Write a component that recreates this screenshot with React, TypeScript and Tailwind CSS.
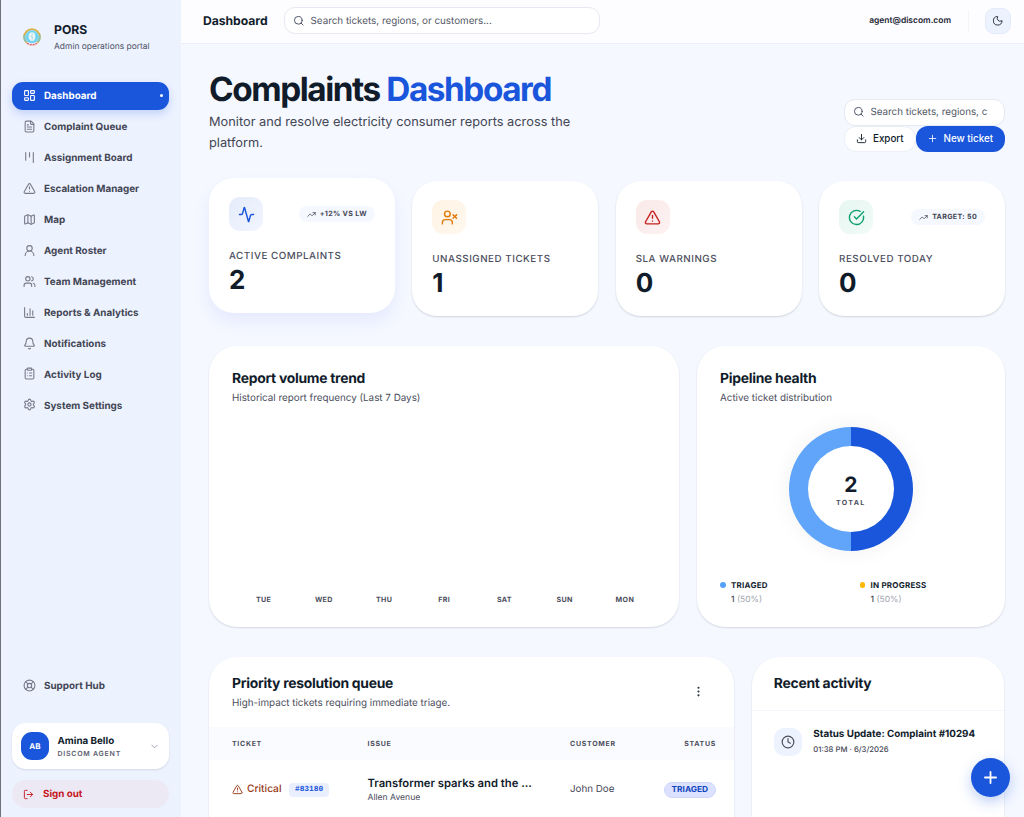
import React from "react";
import {
  Activity,
  Bell,
  ChartColumn,
  ChevronDown,
  CircleCheckBig,
  ClipboardList,
  Clock,
  Download,
  EllipsisVertical,
  FileText,
  Kanban,
  LayoutDashboard,
  LifeBuoy,
  LogOut,
  Map as MapIcon,
  Moon,
  Plus,
  Search,
  Settings,
  TrendingUp,
  TriangleAlert,
  UserRound,
  UserX,
  Users,
} from "lucide-react";

const navItems = [
  { label: "Dashboard", icon: LayoutDashboard, active: true },
  { label: "Complaint Queue", icon: FileText },
  { label: "Assignment Board", icon: Kanban },
  { label: "Escalation Manager", icon: TriangleAlert },
  { label: "Map", icon: MapIcon },
  { label: "Agent Roster", icon: UserRound },
  { label: "Team Management", icon: Users },
  { label: "Reports & Analytics", icon: ChartColumn },
  { label: "Notifications", icon: Bell },
  { label: "Activity Log", icon: ClipboardList },
  { label: "System Settings", icon: Settings },
];

const stats = [
  {
    label: "ACTIVE COMPLAINTS",
    value: "2",
    icon: Activity,
    tone: "bg-gradient-to-br from-[#e5ebfb] to-[#f2f5fe] text-[#1a56db]",
    badge: "+12% VS LW",
    raised: true,
  },
  {
    label: "UNASSIGNED TICKETS",
    value: "1",
    icon: UserX,
    tone: "bg-gradient-to-br from-[#fff3e4] to-[#fff8ef] text-[#e07b0b]",
  },
  {
    label: "SLA WARNINGS",
    value: "0",
    icon: TriangleAlert,
    tone: "bg-gradient-to-br from-[#fae9e9] to-[#fdf2f2] text-[#c5221f]",
  },
  {
    label: "RESOLVED TODAY",
    value: "0",
    icon: CircleCheckBig,
    tone: "bg-gradient-to-br from-[#e6f6f0] to-[#f2fbf8] text-[#0e9f6e]",
    badge: "TARGET: 50",
  },
];

const days = ["TUE", "WED", "THU", "FRI", "SAT", "SUN", "MON"];

const cardShadow = "shadow-[0_1px_2px_rgba(15,23,42,0.14)]";

function Logo() {
  return (
    <svg width="18" height="18" viewBox="0 0 18 18">
      <circle cx="9" cy="9" r="7.9" fill="#8fdcf3" stroke="#e0b04a" strokeWidth="1.8" />
      <path d="M1.3 7.2A7.8 7.8 0 0 0 2.8 13.7" fill="none" stroke="#7fc4b4" strokeWidth="1.5" />
      <path d="M16.7 7.2a7.8 7.8 0 0 1-1.5 6.5" fill="none" stroke="#7fc4b4" strokeWidth="1.5" />
      <circle cx="9" cy="9" r="6" fill="#6fd2f2" />
      <ellipse cx="9" cy="8.6" rx="3.4" ry="4.4" fill="#e3f5f6" />
      <path d="M9.6 5.8 8 9h1.8l-.8 2.8" fill="none" stroke="#b9d3d3" strokeWidth="0.8" />
      <path d="M3.6 15q5.4 3 10.8 0" fill="none" stroke="#f3e9f0" strokeWidth="2.4" />
      <path d="M4 15.3q5 2.7 10 0" fill="none" stroke="#dc5a7c" strokeWidth="1.3" strokeDasharray="2 0.9" />
    </svg>
  );
}

function Sidebar() {
  return (
    <aside className="flex h-full w-[180.5px] shrink-0 flex-col border-l border-[#6f7178] bg-[#edf2ff] pr-[11.5px] pl-[11px]">
      <div className="flex h-[81.5px] shrink-0 items-center pl-[11px]">
        <div className="mt-[-7px]">
          <Logo />
        </div>
        <div className="mt-[-3px] ml-[13px]">
          <div className="text-[12.2px] leading-[16px] font-bold text-[#111c2b]">PORS</div>
          <div className="text-[8.45px] leading-[18px] whitespace-nowrap text-[#4b5163]">Admin operations portal</div>
        </div>
      </div>
      <nav className="flex flex-col gap-[2.95px]">
        {navItems.map(({ label, icon: Icon, active }) => (
          <a
            key={label}
            className={
              active
                ? "flex h-7 items-center rounded-[11px] bg-[#1a56db] pr-[6px] pl-[11px] text-white shadow-[0_4px_8px_rgba(26,86,219,0.2)]"
                : "flex h-7 items-center rounded-[11px] pr-[5px] pl-[11px] text-[#434654]"
            }
          >
            <Icon size={13} strokeWidth={2} className={active ? "" : "text-[#777a88]"} />
            <span className="ml-[8px] flex-1 pt-[2.4px] text-[9.85px] font-bold whitespace-nowrap">{label}</span>
            {active && <span className="size-[3px] rounded-full bg-white" />}
          </a>
        ))}
      </nav>
      <div className="mt-auto flex h-7 shrink-0 items-center pl-[11px] text-[#434654]">
        <LifeBuoy size={13} strokeWidth={2} className="text-[#777a88]" />
        <span className="ml-[8px] pt-[2px] text-[9.85px] font-bold">Support Hub</span>
      </div>
      <div className="mt-[24px] flex h-[46px] shrink-0 items-center rounded-[14px] bg-white pr-[9px] pl-[9px] shadow-[0_1px_2px_rgba(15,23,42,0.12)]">
        <div className="flex size-7 items-center justify-center rounded-[11px] bg-[#1a56db] text-[8px] font-bold text-white">AB</div>
        <div className="ml-[8.5px] flex-1 pt-[3px]">
          <div className="text-[9.8px] leading-[12px] font-bold text-[#111c2b]">Amina Bello</div>
          <div className="text-[7px] leading-[12px] font-semibold tracking-[0.75px] text-[#5c6070]">DISCOM AGENT</div>
        </div>
        <ChevronDown size={11} strokeWidth={2} className="text-[#9a9eac]" />
      </div>
      <div className="mt-[11px] mb-[9px] flex h-7 shrink-0 items-center rounded-[14px] bg-[#ece9f4] pl-[11px] text-[#c5161d]">
        <LogOut size={11} strokeWidth={2} />
        <span className="ml-[9px] pt-[2px] text-[9.8px] font-bold">Sign out</span>
      </div>
    </aside>
  );
}

function TopBar() {
  return (
    <header className="flex h-[44px] shrink-0 items-center border-b border-[#e9eefa] bg-[#fdfdff] pr-[13px] pl-[22.5px]">
      <div className="w-[81px] text-[12.2px] font-bold tracking-[-0.05px] text-[#111c2b]">Dashboard</div>
      <div className="mt-[-2px] flex h-[27px] w-[316px] items-center rounded-[11px] border border-[#e6e9f2] bg-white pl-[8px]">
        <Search size={11.5} strokeWidth={2} className="text-[#4b5163]" />
        <span className="ml-[6px] pt-[2px] text-[9.83px] text-[#535866]">Search tickets, regions, or customers...</span>
      </div>
      <div className="ml-auto text-[8.45px] font-semibold text-[#1b2534]">agent@discom.com</div>
      <div className="mt-[-2px] ml-[17px] h-[22px] w-px bg-[#f2f4fa]" />
      <div className="mt-[-2px] ml-[16px] flex size-[26px] items-center justify-center rounded-[9px] border border-[#e3eaf9] bg-[#edf2ff]">
        <Moon size={11.5} strokeWidth={2} className="text-[#2b3342]" />
      </div>
    </header>
  );
}

function PageHeading() {
  return (
    <div className="flex h-[82px] items-end justify-between">
      <div className="w-[400px] self-start pt-px">
        <h1 className="text-[33.3px] leading-[38px] font-bold tracking-[-1.43px] whitespace-nowrap text-[#111c2b]">
          Complaints <span className="text-[#1a56db]">Dashboard</span>
        </h1>
        <p className="mt-[3px] text-[12.8px] leading-[21px] text-[#434654]">
          Monitor and resolve electricity consumer reports across the platform.
        </p>
      </div>
      <div className="mb-[0.5px] w-[161px]">
        <div className="flex h-[27px] items-center rounded-[11px] border border-[#e6e9f2] bg-white pl-[8px]">
          <Search size={11.5} strokeWidth={2} className="text-[#4b5163]" />
          <span className="ml-[6px] w-[118px] overflow-hidden pt-[2px] text-[9.8px] whitespace-nowrap text-[#535866]">Search tickets, regions, c</span>
        </div>
        <div className="flex">
          <button className="flex h-[26px] w-[71.5px] items-center rounded-[12px] border border-[#eceff7] bg-white pl-[11px] text-[9.8px] font-medium text-[#111c2b]">
            <Download size={11} strokeWidth={2} className="mr-[6px]" />
            <span className="pt-[2px]">Export</span>
          </button>
          <button className="flex h-[26px] flex-1 items-center rounded-[12px] bg-[#1a56db] pl-[11px] text-[9.8px] font-medium whitespace-nowrap text-white">
            <Plus size={11} strokeWidth={1.8} className="mr-[6px]" />
            <span className="pt-[2px]">New ticket</span>
          </button>
        </div>
      </div>
    </div>
  );
}

function StatCards() {
  return (
    <div className="mt-[28.5px] grid grid-cols-4 gap-[17.4px]">
      {stats.map(({ label, value, icon: Icon, tone, badge, raised }) => (
        <div
          key={label}
          className={
            raised
              ? "h-[135.5px] -translate-y-[3px] rounded-[25px] bg-white px-[20px] pt-[19.5px] shadow-[0_9px_16px_rgba(76,96,239,0.09)]"
              : "h-[135.5px] rounded-[25px] bg-white px-[20px] pt-[19.5px] shadow-[0_1px_2px_rgba(15,23,42,0.16)]"
          }
        >
          <div className="flex items-center justify-between">
            <div className={`flex size-[34px] items-center justify-center rounded-[11px] ${tone}`}>
              <Icon size={17} strokeWidth={2} />
            </div>
            {badge && (
              <div className="flex h-4 items-center rounded-full bg-[#f5f8ff] px-[8px] text-[7.1px] font-bold tracking-[0.33px] whitespace-nowrap text-[#434654]">
                <TrendingUp size={9} strokeWidth={2} className="mr-[4px]" />
                <span className="pt-px">{badge}</span>
              </div>
            )}
          </div>
          <div className="mt-[17.5px] text-[9.8px] leading-[15px] font-medium tracking-[0.52px] whitespace-nowrap text-[#4b4e5c]">{label}</div>
          <div className="mt-[3.5px] text-[26px] leading-[28px] font-bold text-[#111c2b]">{value}</div>
        </div>
      ))}
    </div>
  );
}

function CardTitle({ title, subtitle }: { title: string; subtitle?: string }) {
  return (
    <div>
      <h2 className="text-[13.9px] leading-[20px] font-bold tracking-[-0.27px] text-[#111c2b]">{title}</h2>
      {subtitle && <p className="text-[9.83px] leading-[19px] text-[#4b4e5c]">{subtitle}</p>}
    </div>
  );
}

function TrendCard() {
  return (
    <section className={`flex w-[470px] flex-col rounded-[28px] bg-white px-[23px] pt-[23px] pb-[20px] ${cardShadow}`}>
      <CardTitle title="Report volume trend" subtitle="Historical report frequency (Last 7 Days)" />
      <div className="mt-auto grid grid-cols-7 pr-px pl-[1.5px] text-center text-[7.1px] leading-[14px] font-bold tracking-[0.35px] text-[#4b4e5c]">
        {days.map((day) => (
          <span key={day}>{day}</span>
        ))}
      </div>
    </section>
  );
}

function Legend({ color, label }: { color: string; label: string }) {
  return (
    <div className="flex gap-[5.5px]">
      <span className={`mt-[4px] size-[5.5px] rounded-full ${color}`} />
      <div>
        <div className="text-[8px] leading-[14px] font-bold tracking-[0.23px] text-[#111c2b]">{label}</div>
        <div className="mt-[0.5px] text-[8.5px] leading-[14px] text-[#a2a4ae]">
          <span className="font-medium text-[#434654]">1</span> (50%)
        </div>
      </div>
    </div>
  );
}

function PipelineCard() {
  return (
    <section className={`flex w-[308px] flex-col rounded-[28px] bg-white px-[23px] pt-[23px] ${cardShadow}`}>
      <CardTitle title="Pipeline health" subtitle="Active ticket distribution" />
      <div className="mt-[19.5px] mr-[0.5px] flex size-[123.5px] items-center justify-center self-center rounded-full bg-[conic-gradient(#1a56db_0_50%,#60a5fa_50%_100%)] shadow-[0_0_22px_rgba(15,23,42,0.06)]">
        <div className="flex size-[86.5px] flex-col items-center justify-center rounded-full bg-white pt-[6px]">
          <div className="text-[21px] leading-[22px] font-bold text-[#111c2b]">2</div>
          <div className="text-[7px] leading-[12px] font-bold tracking-[1.3px] text-[#4b4e5c]">TOTAL</div>
        </div>
      </div>
      <div className="mt-[27.5px] grid grid-cols-2 gap-[17px]">
        <Legend color="bg-[#55a1f8]" label="TRIAGED" />
        <Legend color="bg-[#ffb708]" label="IN PROGRESS" />
      </div>
    </section>
  );
}

function QueueCard() {
  return (
    <section className={`w-[524.5px] rounded-t-[28px] bg-white ${cardShadow}`}>
      <div className="flex h-[70px] items-center justify-between pr-[29px] pl-[23px]">
        <div className="pt-[4px]">
          <CardTitle title="Priority resolution queue" subtitle="High-impact tickets requiring immediate triage." />
        </div>
        <EllipsisVertical size={13} strokeWidth={2} className="text-[#2b3342]" />
      </div>
      <div className="grid h-[33px] grid-cols-[135.5px_202.5px_1fr_auto] items-center bg-[#fafbfe] pt-[2px] pr-[17.5px] pl-[23px] text-[7px] font-bold tracking-[0.7px] text-[#4b4e5c]">
        <span>TICKET</span>
        <span>ISSUE</span>
        <span>CUSTOMER</span>
        <span>STATUS</span>
      </div>
      <div className="grid h-[60px] grid-cols-[135.5px_202.5px_1fr_auto] items-center pt-px pr-[17.5px] pl-[23px]">
        <div className="flex items-center">
          <TriangleAlert size={11} strokeWidth={2} className="text-[#9a3412]" />
          <span className="ml-[4px] text-[10.2px] font-medium text-[#943410]">Critical</span>
          <span className="ml-[8px] flex h-[14px] items-center rounded-[4px] bg-[#e9effd] px-[5.5px] font-['Liberation_Mono',monospace] text-[7.8px] font-bold text-[#1a56db]">
            <span className="pt-px">#83180</span>
          </span>
        </div>
        <div className="pt-px">
          <div className="text-[11.25px] leading-[16px] font-semibold text-[#111c2b]">Transformer sparks and the ...</div>
          <div className="text-[8.6px] leading-[15px] text-[#4b4e5c]">Allen Avenue</div>
        </div>
        <div className="pt-px text-[9.8px] text-[#434654]">John Doe</div>
        <div className="flex h-4 items-center rounded-full border border-[#cfd7fb] bg-[#dbe1ff] px-[7px] pt-px text-[8.3px] font-bold text-[#0f46bd]">TRIAGED</div>
      </div>
    </section>
  );
}

function ActivityCard() {
  return (
    <section className={`mr-[0.7px] w-[252.5px] rounded-t-[28px] bg-white ${cardShadow}`}>
      <div className="h-[54px] border-b border-[#f4f6fb] pt-[17.5px] pl-[22px]">
        <CardTitle title="Recent activity" />
      </div>
      <div className="flex items-center pt-[16px] pl-[22px]">
        <div className="flex size-7 items-center justify-center rounded-[10px] bg-[#edf2ff]">
          <Clock size={14} strokeWidth={2} className="text-[#4b4e5c]" />
        </div>
        <div className="ml-[11.5px]">
          <div className="text-[9.85px] leading-[15px] font-bold whitespace-nowrap text-[#111c2b]">Status Update: Complaint #10294</div>
          <div className="text-[7.7px] leading-[16px] font-medium text-[#434654]">01:38 PM · 6/3/2026</div>
        </div>
      </div>
    </section>
  );
}

export default function App() {
  return (
    <div className="relative flex h-[817px] w-[1024px] overflow-hidden bg-[#f5f8ff] font-['Inter',sans-serif] [text-rendering:geometricPrecision]">
      <Sidebar />
      <div className="flex min-w-0 flex-1 flex-col">
        <TopBar />
        <main className="min-h-0 flex-1 overflow-hidden pt-[26px] pr-[19px] pl-[28.5px]">
          <PageHeading />
          <StatCards />
          <div className="mt-[29.5px] flex h-[281px] justify-between">
            <TrendCard />
            <PipelineCard />
          </div>
          <div className="mt-[30px] flex h-[240px] justify-between">
            <QueueCard />
            <ActivityCard />
          </div>
        </main>
      </div>
      <button className="absolute right-[14px] bottom-[20px] flex size-[39px] items-center justify-center rounded-full bg-[#1a56db] text-white shadow-[0_5px_14px_rgba(26,86,219,0.28)]">
        <Plus size={19} strokeWidth={2.3} />
      </button>
    </div>
  );
}
